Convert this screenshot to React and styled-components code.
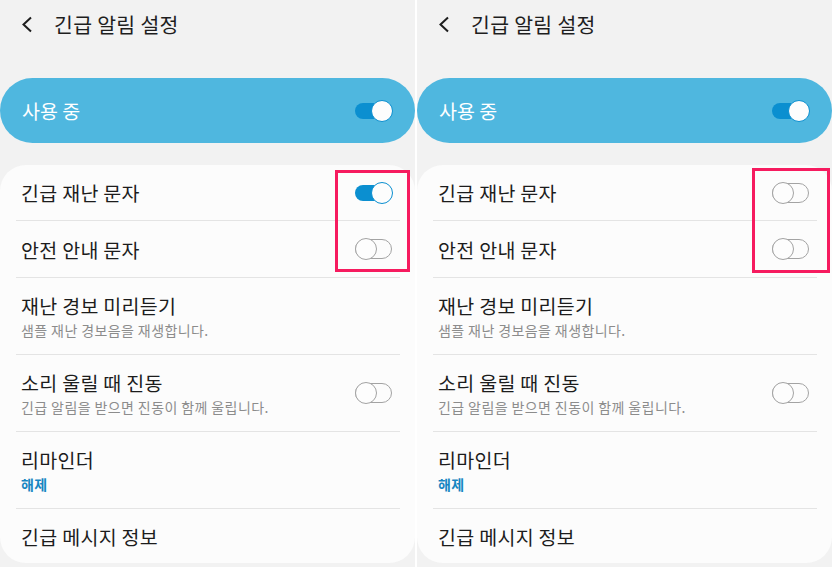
import React from 'react';
import styled, { createGlobalStyle } from 'styled-components';

const GlobalStyle = createGlobalStyle`
  html, body {
    margin: 0;
    padding: 0;
    background: #ffffff;
  }
  body {
    font-family: "Noto Sans CJK KR", "Noto Sans", sans-serif;
    -webkit-font-smoothing: antialiased;
  }
`;

const Screens = styled.div`
  display: flex;
  gap: 2px;
  width: 832px;
  height: 567px;
  background: #ffffff;
`;

const Panel = styled.div`
  position: relative;
  display: flex;
  flex-direction: column;
  width: 415px;
  height: 567px;
  overflow: hidden;
  background: #f2f2f2;
`;

const Header = styled.div`
  display: flex;
  align-items: center;
  height: 48px;
  padding: 0 0 0 21px;
  gap: 21px;
  color: #1e1e1e;
`;

const Title = styled.h1`
  margin: 0;
  font-size: 20.5px;
  font-weight: 400;
  letter-spacing: 0.3px;
`;

const MasterBar = styled.div`
  display: flex;
  align-items: center;
  justify-content: space-between;
  height: 65px;
  margin-top: 30px;
  padding: 0 22px 0 22px;
  border-radius: 33px;
  background: #4fb7df;
  color: #ffffff;
  font-size: 19.5px;
`;

const Card = styled.div`
  display: flex;
  flex-direction: column;
  height: 398px;
  margin-top: 22px;
  border-radius: 26px;
  background: #fcfcfc;
`;

const Row = styled.div`
  display: flex;
  align-items: center;
  justify-content: space-between;
  height: ${({ $h }) => $h || 56}px;
  margin: 0 15px 0 16px;
  padding: 0 7px 0 5px;
  border-bottom: ${({ $last }) => ($last ? 'none' : '1px solid #e4e4e4')};
  box-sizing: border-box;
  flex-shrink: 0;
`;

const Texts = styled.div`
  display: flex;
  flex-direction: column;
  gap: 3px;
`;

const Label = styled.div`
  font-size: 19.5px;
  line-height: 25px;
  letter-spacing: 0.3px;
  color: #1c1c1c;
`;

const Sub = styled.div`
  font-size: 14px;
  line-height: 19px;
  letter-spacing: 0.4px;
  color: ${({ $accent }) => ($accent ? '#1686c2' : '#8c8c8c')};
  font-weight: ${({ $accent }) => ($accent ? 700 : 400)};
`;

const Switch = styled.div`
  position: relative;
  width: 38px;
  height: 22px;
  flex-shrink: 0;
`;

const Track = styled.div`
  position: absolute;
  left: 0;
  top: ${({ $on }) => ($on ? 3 : 1)}px;
  width: 37px;
  height: ${({ $on }) => ($on ? 16 : 20)}px;
  box-sizing: border-box;
  border-radius: 10px;
  background: ${({ $on }) => ($on ? '#0b8fd0' : 'transparent')};
  border: ${({ $on }) => ($on ? 'none' : '1.5px solid #a3a3a3')};
`;

const Thumb = styled.div`
  position: absolute;
  top: 0;
  left: ${({ $on }) => ($on ? 16 : 0)}px;
  width: 22px;
  height: 22px;
  box-sizing: border-box;
  border-radius: 50%;
  background: #fdfdfd;
  border: 1.5px solid ${({ $on }) => ($on ? '#0b8fd0' : '#a3a3a3')};
`;

const Highlight = styled.div`
  position: absolute;
  left: ${({ $left }) => $left}px;
  top: ${({ $top }) => $top}px;
  width: ${({ $w }) => $w}px;
  height: ${({ $h }) => $h}px;
  box-sizing: border-box;
  border: 3px solid #f61b5f;
  pointer-events: none;
`;

const Toggle = ({ on }) => (
  <Switch>
    <Track $on={on} />
    <Thumb $on={on} />
  </Switch>
);

const BackIcon = () => (
  <svg width="12" height="17" viewBox="0 0 12 17">
    <polyline points="10,1.5 2.5,8.5 10,15.5" fill="none" stroke="#1e1e1e" strokeWidth="2" />
  </svg>
);

const Screen = ({ disaster, safety, highlight }) => (
  <Panel>
    <Header>
      <BackIcon />
      <Title>긴급 알림 설정</Title>
    </Header>
    <MasterBar>
      <span>사용 중</span>
      <Toggle on />
    </MasterBar>
    <Card>
      <Row $h={56}>
        <Label>긴급 재난 문자</Label>
        <Toggle on={disaster} />
      </Row>
      <Row $h={57}>
        <Label>안전 안내 문자</Label>
        <Toggle on={safety} />
      </Row>
      <Row $h={77}>
        <Texts>
          <Label>재난 경보 미리듣기</Label>
          <Sub>샘플 재난 경보음을 재생합니다.</Sub>
        </Texts>
      </Row>
      <Row $h={77}>
        <Texts>
          <Label>소리 울릴 때 진동</Label>
          <Sub>긴급 알림을 받으면 진동이 함께 울립니다.</Sub>
        </Texts>
        <Toggle on={false} />
      </Row>
      <Row $h={77}>
        <Texts>
          <Label>리마인더</Label>
          <Sub $accent>해제</Sub>
        </Texts>
      </Row>
      <Row $h={54} $last>
        <Label>긴급 메시지 정보</Label>
      </Row>
    </Card>
    <Highlight {...highlight} />
  </Panel>
);

export default function App() {
  return (
    <>
      <GlobalStyle />
      <Screens>
        <Screen disaster safety={false} highlight={{ $left: 335, $top: 170, $w: 75, $h: 102 }} />
        <Screen disaster={false} safety={false} highlight={{ $left: 335, $top: 168, $w: 78, $h: 105 }} />
      </Screens>
    </>
  );
}
